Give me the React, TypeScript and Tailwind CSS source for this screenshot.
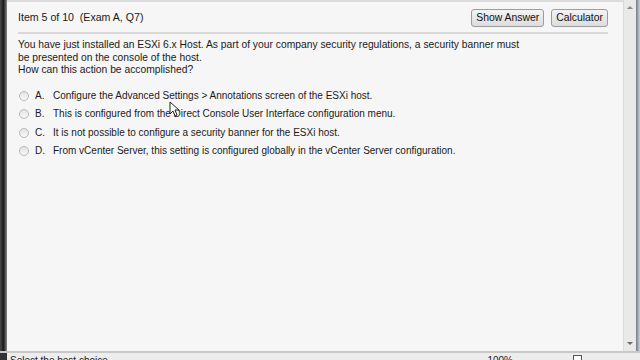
import React from "react";

const options = [
  { key: "A.", text: "Configure the Advanced Settings > Annotations screen of the ESXi host." },
  { key: "B.", text: "This is configured from the Direct Console User Interface configuration menu." },
  { key: "C.", text: "It is not possible to configure a security banner for the ESXi host." },
  { key: "D.", text: "From vCenter Server, this setting is configured globally in the vCenter Server configuration." },
];

function Radio() {
  return (
    <span className="inline-block w-[10px] h-[10px] rounded-full border border-[#b8b8b8] bg-gradient-to-b from-[#e4e4e4] to-[#f8f8f8]" />
  );
}

function Button({ label }: { label: string }) {
  return (
    <button className="h-[18px] px-[4px] border border-[#9c9c9c] rounded-[3px] bg-gradient-to-b from-[#f4f4f4] to-[#dcdcdc] text-[10.4px] leading-none text-[#111]">
      {label}
    </button>
  );
}

export default function App() {
  return (
    <div
      className="w-[640px] h-[360px] flex flex-col overflow-hidden bg-[#f6f6f6] text-[#1a1a1a]"
      style={{ fontFamily: '"Liberation Sans", Arial, sans-serif' }}
    >
      <div className="flex flex-1 min-h-0">
        {/* dark window edge */}
        <div className="w-[7px] bg-gradient-to-r from-[#4a4a4a] via-[#1c1c1c] to-[#8a8a8a]" />

        <div className="relative flex-1 flex flex-col pl-[11px] pr-[15px] pt-[1px] border-t-2 border-[#dcdcdc]">
          {/* header */}
          <div className="flex items-center justify-between h-[31px] border-b-2 border-[#d8d8d8]">
            <span className="text-[10.6px]">Item 5 of 10&nbsp;&nbsp;(Exam A, Q7)</span>
            <div className="flex gap-[7px] mt-[1px]">
              <Button label="Show Answer" />
              <Button label="Calculator" />
            </div>
          </div>

          {/* question */}
          <div className="mt-[5px] text-[10.3px] leading-[12.5px]">
            <p>You have just installed an ESXi 6.x Host. As part of your company security regulations, a security banner must</p>
            <p>be presented on the console of the host.</p>
            <p>How can this action be accomplished?</p>
          </div>

          {/* options */}
          <div className="mt-[13px] flex flex-col gap-[6.6px] text-[10px] leading-[12px]">
            {options.map((o) => (
              <div key={o.key} className="flex items-center">
                <span className="ml-[1px] mr-[6px] flex items-center"><Radio /></span>
                <span className="w-[18px]">{o.key}</span>
                <span>{o.text}</span>
              </div>
            ))}
          </div>

          {/* mouse pointer */}
          <svg className="absolute left-[162px] top-[99px]" width="10" height="16" viewBox="0 0 10 16">
            <path d="M1 1 L1 13 L4 10 L6 15 L8 14 L6 9 L10 9 Z" fill="#fff" stroke="#222" strokeWidth="1" />
          </svg>
        </div>

        {/* scrollbar */}
        <div className="w-[13px] bg-[#e9e9e9] border-l border-[#dadada] flex flex-col items-center justify-between py-[6px]">
          <span className="w-0 h-0 border-x-[3px] border-x-transparent border-b-[3px] border-b-[#8a8a8a]" />
          <span className="w-0 h-0 border-x-[3px] border-x-transparent border-t-[3px] border-t-[#6a6a6a]" />
        </div>
        <div className="w-[4px] bg-gradient-to-r from-[#7a7a7a] to-[#c9d3e6]" />
      </div>

      {/* status bar */}
      <div className="h-[9px] border-t-2 border-[#c8c8c8] bg-[#ededed] flex items-start overflow-hidden">
        <div className="w-[7px] h-full bg-[#333]" />
        <span className="ml-[3px] mt-[3px] text-[10px] leading-none">Select the best choice</span>
        <span className="ml-auto mt-[3px] text-[10px] leading-none">100%</span>
        <span className="ml-[60px] mr-[58px] mt-[2px] w-[9px] h-[9px] border border-[#555] bg-white" />
      </div>
    </div>
  );
}
